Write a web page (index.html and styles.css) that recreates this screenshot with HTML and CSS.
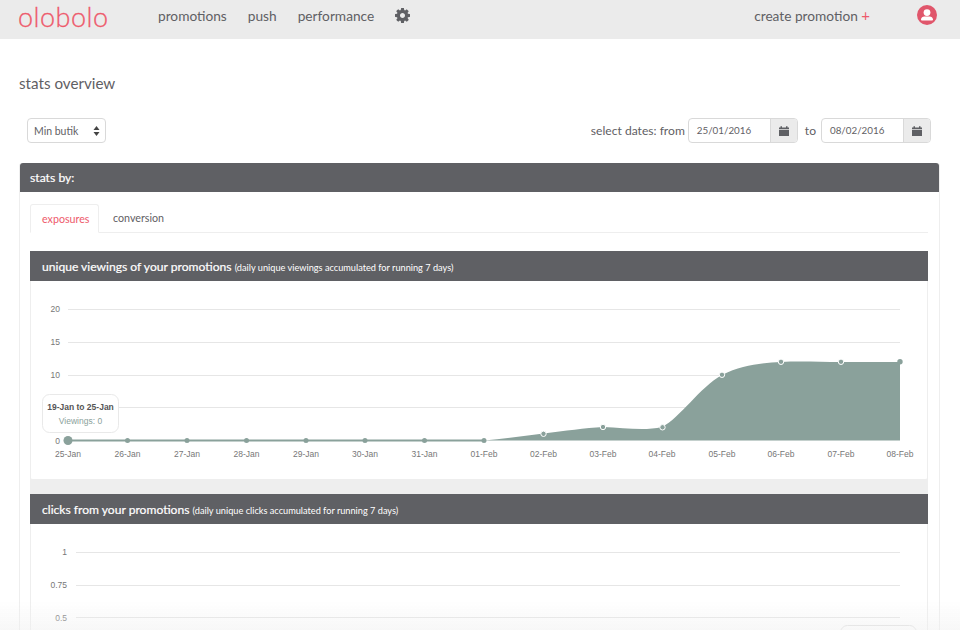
FILE: index.html
```html
<!DOCTYPE html>
<html lang="en">
<head>
  <meta charset="UTF-8" />
  <title>olobolo - stats overview</title>
  <link rel="stylesheet" href="styles.css">
</head>
<body>

  <nav class="topbar">
    <a class="logo">olobolo</a>
    <ul class="menu">
      <li>promotions</li>
      <li>push</li>
      <li>performance</li>
      <li class="menu-icon">
        <svg width="15" height="15" viewBox="0 0 1536 1536"><path fill="#5f6064" d="M1024 768q0-106-75-181t-181-75-181 75-75 181 75 181 181 75 181-75 75-181zm512-109v222q0 12-8 23t-20 13l-185 28q-19 54-39 91 35 50 107 138 10 12 10 25t-9 23q-27 37-99 108t-94 71q-12 0-26-9l-138-108q-44 23-91 38-16 136-29 186-7 28-36 28h-222q-14 0-24.5-8.5t-11.5-21.5l-28-184q-49-16-90-37l-141 107q-10 9-25 9-14 0-25-11-126-114-165-168-7-10-7-23 0-12 8-23 15-21 51-66.5t54-70.5q-27-50-41-99l-183-27q-13-2-21-12.5t-8-23.5v-222q0-12 8-23t19-13l186-28q14-46 39-92-40-57-107-138-10-12-10-24 0-10 9-23 26-36 98.5-107.5t94.5-71.5q13 0 26 10l138 107q44-23 91-38 16-136 29-186 7-28 36-28h222q14 0 24.5 8.5t11.5 21.5l28 184q49 16 90 37l142-107q9-9 24-9 13 0 25 10 129 119 165 170 7 8 7 22 0 12-8 23-15 21-51 66.5t-54 70.5q26 50 41 98l183 28q13 2 21 12.5t8 23.5z"/></svg>
      </li>
    </ul>
    <a class="create">create promotion <span class="plus">+</span></a>
    <svg class="avatar" width="20" height="20" viewBox="0 0 20 20">
      <circle cx="10" cy="10" r="10" fill="#e0566b"/>
      <circle cx="10" cy="7.6" r="3.4" fill="#fff"/>
      <path fill="#fff" d="M4 14.4c0-2 1.9-3 3.2-3h5.6c1.300 0 3.200 1 3.200 3 0 .7-.5 1.200-1.200 1.200H5.200C4.500 15.600 4 15.100 4 14.400z"/>
    </svg>
  </nav>

  <main class="page">
    <h1>stats overview</h1>

    <div class="filters">
      <div class="shop-select">
        Min butik
        <svg width="7" height="10" viewBox="0 0 7 10"><path fill="#444" d="M3.500 0 6.500 4H.5zM3.500 10 .5 6h6z"/></svg>
      </div>
      <div class="dates">
        <span>select dates: from</span>
        <div class="date-field">
          <div class="date-value">25/01/2016</div>
          <div class="date-btn">
            <svg width="10" height="10" viewBox="0 0 10 10"><path fill="#5f6064" d="M0 1.500h1.500V.3h1.500v1.200h4V.3h1.500v1.200H10V3H0zM0 3.800h10V10H0z"/></svg>
          </div>
        </div>
        <span class="date-to">to</span>
        <div class="date-field">
          <div class="date-value">08/02/2016</div>
          <div class="date-btn">
            <svg width="10" height="10" viewBox="0 0 10 10"><path fill="#5f6064" d="M0 1.500h1.500V.3h1.500v1.200h4V.3h1.500v1.200H10V3H0zM0 3.800h10V10H0z"/></svg>
          </div>
        </div>
      </div>
    </div>

    <section class="panel">
      <div class="panel-head">stats by:</div>
      <div class="panel-body">
        <div class="tabs">
          <div class="tab active">exposures</div>
          <div class="tab">conversion</div>
        </div>

        <div class="chart-list">
          <div class="chart-box">
            <div class="chart-head">unique viewings of your promotions <small>(daily unique viewings accumulated for running 7 days)</small></div>
            <svg class="chart" width="898" height="198" viewBox="30 281 898 198">
              <g class="grid">
                <path d="M68 309.500H900M68 342.500H900M68 375.500H900M68 407.500H900"/>
              </g>
              <g class="y-labels">
                <text x="60" y="312">20</text>
                <text x="60" y="345">15</text>
                <text x="60" y="378">10</text>
                <text x="60" y="443.500">0</text>
              </g>
              <path class="area" d="M68 440.500H484C504 438.500 524 436 543.500 433.500C565 431 585 428 603 427C625 428 645 431 662 427C680 418 700 387 722 375C742 365 762 363 781 362C800 361 820 362 841 362H900V440.500Z"/>
              <path class="base-line" d="M68 440.500H484"/>
              <g class="dots">
                <circle cx="68" cy="440.500" r="4.500"/>
                <circle cx="127.500" cy="440.500" r="2.500"/>
                <circle cx="187" cy="440.500" r="2.500"/>
                <circle cx="246.500" cy="440.500" r="2.500"/>
                <circle cx="306" cy="440.500" r="2.500"/>
                <circle cx="365" cy="440.500" r="2.500"/>
                <circle cx="424.500" cy="440.500" r="2.500"/>
                <circle cx="484" cy="440.500" r="2.500"/>
              </g>
              <g class="dots-open">
                <circle cx="543.500" cy="433.800" r="2.700"/>
                <circle cx="603" cy="427" r="2.700"/>
                <circle cx="662.500" cy="427.300" r="2.700"/>
                <circle cx="722" cy="374.800" r="2.700"/>
                <circle cx="781" cy="361.800" r="2.700"/>
                <circle cx="841" cy="361.800" r="2.700"/>
                <circle class="dot-end" cx="900" cy="361.800" r="2.700"/>
              </g>
              <g class="x-labels">
                <text x="68" y="456.500">25-Jan</text>
                <text x="127.500" y="456.500">26-Jan</text>
                <text x="187" y="456.500">27-Jan</text>
                <text x="246.500" y="456.500">28-Jan</text>
                <text x="306" y="456.500">29-Jan</text>
                <text x="365" y="456.500">30-Jan</text>
                <text x="424.500" y="456.500">31-Jan</text>
                <text x="484" y="456.500">01-Feb</text>
                <text x="543.500" y="456.500">02-Feb</text>
                <text x="603" y="456.500">03-Feb</text>
                <text x="662" y="456.500">04-Feb</text>
                <text x="722" y="456.500">05-Feb</text>
                <text x="781" y="456.500">06-Feb</text>
                <text x="841" y="456.500">07-Feb</text>
                <text x="900" y="456.500">08-Feb</text>
              </g>
              <g class="tooltip">
                <rect x="42.500" y="394.500" width="76" height="38" rx="7"/>
                <text class="tip-title" x="80.500" y="410">19-Jan to 25-Jan</text>
                <text class="tip-value" x="80.500" y="424">Viewings: 0</text>
              </g>
            </svg>
          </div>

          <div class="chart-box">
            <div class="chart-head">clicks from your promotions <small>(daily unique clicks accumulated for running 7 days)</small></div>
            <svg class="chart" width="898" height="198" viewBox="30 524 898 198">
              <g class="grid">
                <path d="M76 552.500H900M76 585.500H900M76 617.500H900"/>
              </g>
              <g class="y-labels">
                <text x="67" y="555">1</text>
                <text x="67" y="588">0.75</text>
                <text x="67" y="621">0.5</text>
              </g>
              <rect class="tooltip-edge" x="840.500" y="625.500" width="76" height="30" rx="7"/>
            </svg>
          </div>
        </div>
      </div>
    </section>
  </main>

  <div class="bottom-fade"></div>

</body>
</html>
```

FILE: styles.css
```css
* {
  box-sizing: border-box;
  margin: 0;
  padding: 0;
}

html, body {
  height: 630px;
  overflow: hidden;
}

body {
  background: #fff;
  color: #5f6064;
  font-family: Lato, "Open Sans", sans-serif;
}

.topbar {
  display: flex;
  align-items: center;
  height: 39px;
  padding: 0 23px 9px 18px;
  background: #ebebeb;
}

.logo {
  width: 140px;
  margin-top: 3px;
  font-size: 27px;
  font-weight: 300;
  letter-spacing: 0.5px;
  line-height: 30px;
  color: #ee5a6b;
  -webkit-text-stroke: 0.3px #ee5a6b;
}

.menu {
  display: flex;
  align-items: center;
  gap: 21px;
  list-style: none;
  font-size: 13.700px;
}

.menu-icon {
  display: flex;
}

.create {
  margin-left: auto;
  margin-right: 47px;
  font-size: 13.700px;
}

.plus {
  color: #ee5a6b;
  font-size: 15px;
}

.page {
  padding: 0 20px 0 19px;
}

h1 {
  margin-top: 35px;
  font-size: 15.200px;
  font-weight: 400;
  line-height: 18px;
}

.filters {
  display: flex;
  justify-content: space-between;
  align-items: center;
  margin-top: 26px;
  padding: 0 9px 0 8px;
}

.shop-select {
  display: flex;
  align-items: center;
  justify-content: space-between;
  width: 79px;
  height: 25px;
  padding: 0 5px 0 6px;
  border: 1px solid #d9d9d9;
  border-radius: 4px;
  font-size: 10.500px;
}

.dates {
  display: flex;
  align-items: center;
  gap: 3px;
  font-size: 12.100px;
}

.date-to {
  margin: 0 2px 0 4px;
}

.date-field {
  display: flex;
  width: 110px;
  height: 25px;
  border: 1px solid #d9d9d9;
  border-radius: 4px;
  overflow: hidden;
}

.date-value {
  flex: 1;
  padding-left: 8px;
  font-size: 9.800px;
  line-height: 22px;
}

.date-btn {
  display: flex;
  align-items: center;
  justify-content: center;
  width: 27px;
  background: #ebebeb;
  border-left: 1px solid #d9d9d9;
}

.panel {
  margin-top: 20px;
  border: 1px solid #eeeeee;
  border-top: 0;
  border-radius: 3px 3px 0 0;
}

.panel-head {
  height: 29px;
  padding-left: 10px;
  background: #5f6064;
  border-radius: 3px 3px 0 0;
  color: #fff;
  font-size: 12.200px;
  line-height: 29px;
  -webkit-text-stroke: 0.2px #fff;
}

.panel-body {
  padding: 12px 11px 0 10px;
}

.tabs {
  display: flex;
  height: 29px;
  border-bottom: 1px solid #eeeeee;
}

.tab {
  height: 29px;
  padding: 0 11px;
  font-size: 10.700px;
  line-height: 28px;
}

.tab.active {
  width: 69px;
  border: 1px solid #eeeeee;
  border-bottom-color: #fff;
  border-radius: 3px 3px 0 0;
  color: #ee5a6b;
}

.tab + .tab {
  padding-left: 14px;
}

.chart-list {
  display: flex;
  flex-direction: column;
  gap: 15px;
  margin-top: 18px;
  background: #eeeeee;
}

.chart-box {
  background: #fff;
  border-radius: 3px;
}

.chart-head {
  height: 30px;
  padding-left: 12px;
  background: #5f6064;
  color: #fff;
  font-size: 12.100px;
  line-height: 31px;
  -webkit-text-stroke: 0.2px #fff;
}

.chart-head small {
  font-size: 9.200px;
  -webkit-text-stroke: 0;
}

.chart {
  display: block;
  box-shadow: inset 1px 0 0 #eeeeee, inset -1px 0 0 #eeeeee;
  font-family: "Liberation Sans", Arial, sans-serif;
}

.grid path {
  fill: none;
  stroke: #e6e6e6;
  stroke-width: 1;
}

.y-labels text {
  fill: #777;
  font-size: 8.500px;
  text-anchor: end;
}

.x-labels text {
  fill: #777;
  font-size: 8.500px;
  text-anchor: middle;
}

.area {
  fill: #8aa19b;
}

.base-line {
  fill: none;
  stroke: #8aa19b;
  stroke-width: 2;
}

.dots circle {
  fill: #8aa19b;
}

.dots-open circle {
  fill: #8aa19b;
  stroke: #fff;
  stroke-width: 1;
}

.dots-open .dot-end {
  stroke: none;
}

.tooltip rect {
  fill: #fff;
  stroke: #e9e9e9;
}

.tooltip text {
  font-size: 8.500px;
  text-anchor: middle;
}

.tip-title {
  fill: #555;
  font-weight: 700;
}

.tip-value {
  fill: #8aa19b;
}

.tooltip-edge {
  fill: #fff;
  stroke: #e0e0e0;
}

.bottom-fade {
  position: fixed;
  left: 0;
  right: 0;
  bottom: 0;
  height: 30px;
  background: linear-gradient(rgba(240, 240, 240, 0), rgba(240, 240, 240, 0.5));
}
```
